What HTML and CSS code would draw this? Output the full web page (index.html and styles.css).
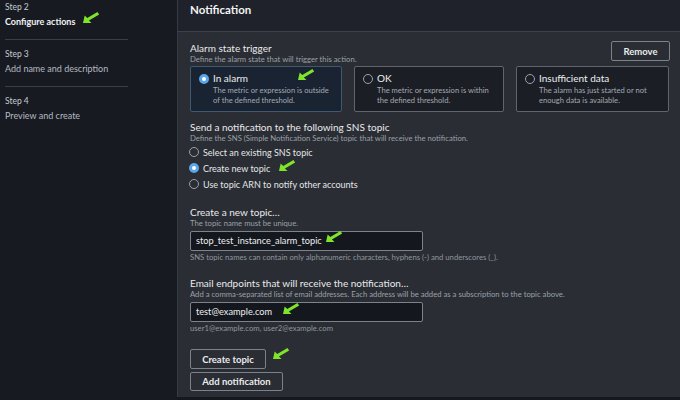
FILE: index.html
```html
<!DOCTYPE html>
<html>
<head>
<meta charset="utf-8">
<link rel="stylesheet" href="styles.css">
</head>
<body>
<div class="page">
  <aside class="sidebar">
    <div class="step first">
      <div class="step-num">Step 2</div>
      <div class="step-title active">Configure actions</div>
    </div>
    <div class="step">
      <div class="step-num">Step 3</div>
      <div class="step-title">Add name and description</div>
    </div>
    <div class="step last">
      <div class="step-num">Step 4</div>
      <div class="step-title">Preview and create</div>
    </div>
  </aside>
  <main class="panel">
    <div class="panel-header">Notification</div>
    <div class="panel-body">
      <div class="row-top">
        <div>
          <div class="label">Alarm state trigger</div>
          <div class="desc">Define the alarm state that will trigger this action.</div>
        </div>
        <button class="btn remove">Remove</button>
      </div>
      <div class="cards">
        <div class="card selected">
          <span class="radio on"></span>
          <div>
            <div class="card-title">In alarm</div>
            <div class="card-desc">The metric or expression is outside of the defined threshold.</div>
          </div>
        </div>
        <div class="card">
          <span class="radio"></span>
          <div>
            <div class="card-title">OK</div>
            <div class="card-desc">The metric or expression is within the defined threshold.</div>
          </div>
        </div>
        <div class="card">
          <span class="radio"></span>
          <div>
            <div class="card-title">Insufficient data</div>
            <div class="card-desc">The alarm has just started or not enough data is available.</div>
          </div>
        </div>
      </div>

      <div class="label sec">Send a notification to the following SNS topic</div>
      <div class="desc">Define the SNS (Simple Notification Service) topic that will receive the notification.</div>
      <div class="radios">
        <div class="radio-row"><span class="radio"></span>Select an existing SNS topic</div>
        <div class="radio-row"><span class="radio on"></span>Create new topic</div>
        <div class="radio-row"><span class="radio"></span>Use topic ARN to notify other accounts</div>
      </div>

      <div class="label sec2">Create a new topic…</div>
      <div class="desc">The topic name must be unique.</div>
      <div class="input">stop_test_instance_alarm_topic</div>
      <div class="hint">SNS topic names can contain only alphanumeric characters, hyphens (-) and underscores (_).</div>

      <div class="label sec2">Email endpoints that will receive the notification…</div>
      <div class="desc">Add a comma-separated list of email addresses. Each address will be added as a subscription to the topic above.</div>
      <div class="input">test@example.com</div>
      <div class="hint">user1@example.com, user2@example.com</div>

      <div class="buttons">
        <button class="btn create">Create topic</button>
        <button class="btn add">Add notification</button>
      </div>
    </div>
  </main>

  <svg class="arrow a1" viewBox="0 0 20 14"><polygon points="0,13 2,4 5,7 17,0 19,3 7,10 10,13" fill="#7fe52a"/></svg>
  <svg class="arrow a2" viewBox="0 0 20 14"><polygon points="0,13 2,4 5,7 17,0 19,3 7,10 10,13" fill="#7fe52a"/></svg>
  <svg class="arrow a3" viewBox="0 0 20 14"><polygon points="0,13 2,4 5,7 17,0 19,3 7,10 10,13" fill="#7fe52a"/></svg>
  <svg class="arrow a4" viewBox="0 0 20 14"><polygon points="0,13 2,4 5,7 17,0 19,3 7,10 10,13" fill="#7fe52a"/></svg>
  <svg class="arrow a5" viewBox="0 0 20 14"><polygon points="0,13 2,4 5,7 17,0 19,3 7,10 10,13" fill="#7fe52a"/></svg>
  <svg class="arrow a6" viewBox="0 0 20 14"><polygon points="0,13 2,4 5,7 17,0 19,3 7,10 10,13" fill="#7fe52a"/></svg>
</div>
</body>
</html>
```

FILE: styles.css
```css
* { box-sizing: border-box; }
html, body { margin: 0; padding: 0; }
body {
  width: 680px;
  height: 400px;
  overflow: hidden;
  background: #15181e;
  font-family: Lato, "Open Sans", sans-serif;
  color: #e9ebed;
}
.page {
  position: relative;
  display: flex;
  width: 680px;
  height: 400px;
}
.sidebar {
  width: 177px;
  flex: none;
  background: #171a21;
  padding: 0 0 0 5px;
}
.step {
  width: 123px;
  padding: 8px 0 10px;
  border-bottom: 1px solid #3a3e46;
}
.step.first { padding-top: 1px; }
.step.last { border-bottom: none; }
.step-num {
  font-size: 8.5px;
  line-height: 12px;
  color: #c6cbd1;
}
.step-title {
  margin-top: 2px;
  font-size: 9px;
  line-height: 14px;
  color: #b4bac2;
}
.step-title.active {
  font-weight: 700;
  color: #f2f3f3;
}
.panel {
  flex: 1;
  display: flex;
  flex-direction: column;
  border-left: 1px solid #363a42;
  height: 397px;
  background: #2a2d33;
}
.panel-header {
  height: 32px;
  flex: none;
  background: #1f222a;
  border-bottom: 1px solid #3d4149;
  padding: 2px 0 0 12px;
  font-size: 11.5px;
  line-height: 16px;
  font-weight: 700;
  color: #f2f3f3;
}
.panel-body {
  flex: 1;
  padding: 9px 10px 0 12px;
}
.row-top {
  display: flex;
  justify-content: space-between;
  align-items: flex-start;
}
.row-top > div { padding-top: 1px; }
.label {
  font-size: 10px;
  line-height: 12px;
  color: #e9ebed;
}
.desc {
  font-size: 7.7px;
  line-height: 11px;
  color: #99a1a9;
  white-space: nowrap;
}
.btn {
  font-family: inherit;
  background: transparent;
  border: 1px solid #7a828c;
  border-radius: 2px;
  color: #e9ebed;
  font-weight: 700;
  font-size: 9.5px;
  padding: 0;
  display: block;
}
.remove {
  width: 59px;
  height: 20px;
}
.cards {
  display: grid;
  grid-template-columns: 152px 150px 153px;
  column-gap: 12px;
  margin-top: 1px;
}
.card {
  display: flex;
  gap: 4px;
  height: 46px;
  padding: 5px 6px 0 8px;
  border: 1px solid #5e656e;
  border-radius: 2px;
  background: #1b1e25;
}
.card.selected {
  background: #192331;
  border-color: #3f5a70;
}
.card .radio { margin-top: 2px; }
.card-title {
  font-size: 10px;
  line-height: 13px;
  color: #eef0f2;
}
.card-desc {
  font-size: 7.6px;
  line-height: 10px;
  color: #a3aab2;
}
.radio {
  flex: none;
  width: 10px;
  height: 10px;
  border-radius: 50%;
  border: 1px solid #9aa2ab;
  display: inline-block;
}
.radio.on {
  border: 3px solid #5aa6e8;
  background: #ffffff;
}
.sec { margin-top: 9px; }
.sec2 { margin-top: 14px; }
.radio-row {
  display: flex;
  align-items: center;
  gap: 4px;
  height: 16px;
  font-size: 9px;
  color: #e3e6e9;
  margin-left: -1px;
}
.input {
  margin-top: 2px;
  width: 233px;
  height: 20px;
  border: 1px solid #7b838d;
  border-radius: 2px;
  background: #14171d;
  font-size: 9.2px;
  line-height: 18px;
  padding-left: 5px;
  color: #eef0f2;
}
.hint {
  margin-top: 1px;
  font-size: 7.7px;
  line-height: 11px;
  color: #8f979f;
  white-space: nowrap;
}
.buttons {
  margin-top: 15px;
  display: flex;
  flex-direction: column;
  gap: 3px;
  align-items: flex-start;
}
.create { width: 76px; height: 20px; }
.add { width: 93px; height: 19px; }
.arrow {
  position: absolute;
  width: 17px;
  height: 12px;
}
.a1 { left: 83px; top: 12px; }
.a2 { left: 298px; top: 69px; }
.a3 { left: 279px; top: 160px; }
.a4 { left: 326px; top: 231px; }
.a5 { left: 283px; top: 303px; }
.a6 { left: 273px; top: 348px; }
```
